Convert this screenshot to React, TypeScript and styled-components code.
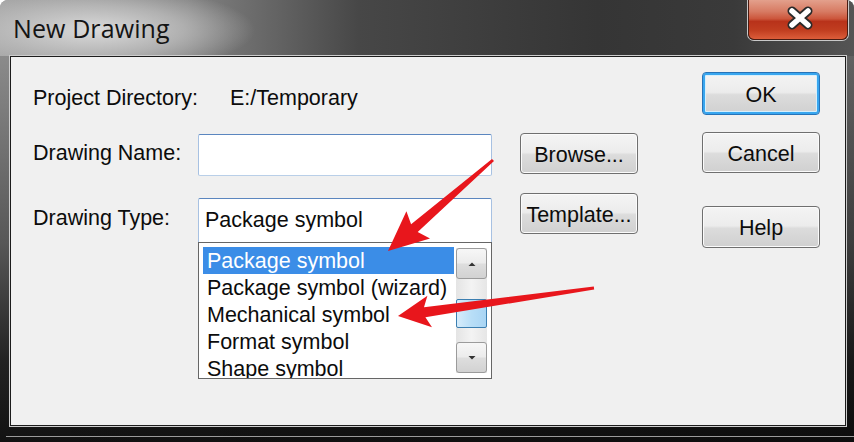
import React from 'react';
import styled, { createGlobalStyle } from 'styled-components';

const Global = createGlobalStyle`
  html, body { margin: 0; padding: 0; background: #ffffff; }
  body { font-family: "Liberation Sans", Arial, sans-serif; }
  * { box-sizing: border-box; }
`;

const Window = styled.div`
  position: relative;
  width: 854px;
  height: 442px;
  overflow: hidden;
  display: flex;
  flex-direction: column;
  border-radius: 8px 8px 0 0;
  background:
    linear-gradient(90deg, rgba(0,0,0,0) 0%, rgba(0,0,0,0.3) 100%),
    linear-gradient(180deg, #9a9a9a 0%, #7c7c7c 25%, #575757 55%, #222 82%, #121212 100%);
`;

const TitleBar = styled.div`
  height: 56px;
  flex: none;
  display: flex;
  align-items: flex-start;
  justify-content: space-between;
  padding-left: 13px;
  background:
    radial-gradient(ellipse 160px 44px at 95px 30px, rgba(222,222,222,0.95) 0%, rgba(200,200,200,0.65) 55%, rgba(190,190,190,0) 100%),
    linear-gradient(90deg, #a0a0a0 0%, #828282 22%, #474747 42%, #353535 70%, #3a3a3a 86%, #555 100%);
`;

const Title = styled.div`
  margin-top: 11px;
  font-family: "Open Sans", "Noto Sans", sans-serif;
  font-size: 25px;
  color: #141414;
  letter-spacing: 0.1px;
`;

const CloseButton = styled.div`
  width: 100px;
  height: 40px;
  margin-right: 6px;
  display: flex;
  align-items: center;
  justify-content: center;
  padding: 0 0 4px 4px;
  border: 1px solid #4a1c12;
  border-top: none;
  border-radius: 0 0 6px 6px;
  box-shadow: 0 0 0 1px #c9c9c9;
  background: linear-gradient(180deg, #e3a08c 0%, #d77a62 30%, #cc563b 48%, #b8321a 55%, #c13e20 78%, #dc5d3a 100%);
`;

const Client = styled.div`
  flex: none;
  height: 370px;
  margin: 0 8px 0 10px;
  border: 1px solid #1c1c1c;
  box-shadow: 0 0 0 1px #cdcdcd;
  background: #f0f0f0;
  display: flex;
  padding-left: 22px;
`;

const BottomFrame = styled.div`
  flex: none;
  height: 1px;
  margin: 10px 0 0 6px;
  background: #9a9a9a;
`;

const FormColumn = styled.div`
  display: flex;
  flex-direction: column;
  padding-top: 25px;
`;

const FormRow = styled.div<{ $mt: number }>`
  display: flex;
  align-items: flex-start;
  margin-top: ${p => p.$mt}px;
`;

const Label = styled.div<{ $h: number }>`
  width: 165px;
  font-size: 21.5px;
  line-height: ${p => p.$h}px;
  color: #0c0c0c;
  white-space: nowrap;
`;

const Value = styled.div`
  margin-left: 32px;
  font-size: 21.5px;
  line-height: 32px;
  color: #0c0c0c;
`;

const Field = styled.div<{ $mt: number }>`
  width: 294px;
  margin-top: ${p => p.$mt}px;
  display: flex;
  flex-direction: column;
`;

const TextBox = styled.div<{ $open?: boolean }>`
  height: ${p => (p.$open ? 44 : 42)}px;
  background: #fff;
  border: 1px solid #a7c1e2;
  border-top-color: #5b86bf;
  border-bottom: ${p => (p.$open ? 'none' : '1px solid #b9cfe8')};
  border-radius: ${p => (p.$open ? '2px 2px 0 0' : '2px')};
  padding-left: 6px;
  font-size: 21.5px;
  line-height: 42px;
  color: #0c0c0c;
`;

const ListBox = styled.div`
  height: 137px;
  background: #fff;
  border: 1px solid #666;
  display: flex;
`;

const Items = styled.div`
  flex: 1;
  overflow: hidden;
  padding: 4px 2px 0 4px;
`;

const Item = styled.div<{ $sel?: boolean }>`
  height: 27px;
  line-height: 28px;
  padding-left: 4px;
  font-size: 21.5px;
  white-space: nowrap;
  color: ${p => (p.$sel ? '#fff' : '#0c0c0c')};
  background: ${p => (p.$sel ? '#3b8de7' : 'transparent')};
`;

const ScrollBar = styled.div`
  width: 31px;
  margin: 5px 4px 5px 0;
  display: flex;
  flex-direction: column;
  background: linear-gradient(90deg, #e4e4e4 0%, #f3f3f3 50%, #e6e6e6 100%);
`;

const ScrollButton = styled.div`
  height: 31px;
  flex: none;
  border: 1px solid #9b9b9b;
  border-radius: 3px;
  display: flex;
  align-items: center;
  justify-content: center;
  background: linear-gradient(180deg, #f7f7f7 0%, #ececec 48%, #dedede 52%, #d2d2d2 100%);
`;

const Track = styled.div`
  flex: 1;
  display: flex;
  flex-direction: column;
`;

const Thumb = styled.div`
  margin-top: 20px;
  height: 29px;
  border: 1px solid #3c7fb1;
  border-radius: 2px;
  background: linear-gradient(90deg, #d6ecfb 0%, #b8def7 50%, #a9d5f4 100%);
`;

const Button = styled.div<{ $h: number; $mt?: number; $ml?: number; $default?: boolean }>`
  width: 118px;
  height: ${p => p.$h}px;
  margin-top: ${p => p.$mt ?? 0}px;
  margin-left: ${p => p.$ml ?? 0}px;
  flex: none;
  display: flex;
  align-items: center;
  justify-content: center;
  padding-top: 3px;
  font-size: 21.5px;
  color: #0c0c0c;
  border: 1px solid ${p => (p.$default ? '#2673b8' : '#6f6f6f')};
  border-radius: 4px;
  box-shadow: ${p =>
    p.$default
      ? 'inset 0 0 0 2px #38a6ef, inset 0 0 0 3px #d6effc'
      : 'inset 0 0 0 1px #fbfbfb'};
  background: linear-gradient(180deg, #f4f4f4 0%, #ececec 47%, #dcdcdc 53%, #d0d0d0 100%);
`;

const ButtonColumn = styled.div`
  display: flex;
  flex-direction: column;
  margin-left: 64px;
  padding-top: 15px;
`;

const Overlay = styled.svg`
  position: absolute;
  left: 0;
  top: 0;
  pointer-events: none;
`;

const Caret = ({ up }: { up?: boolean }) => (
  <svg width="10" height="6" viewBox="0 0 10 6">
    {up ? <path d="M1.5 5 L5 1.5 L8.5 5 Z" fill="#333" /> : <path d="M1.5 1 L8.5 1 L5 4.5 Z" fill="#333" />}
  </svg>
);

const CloseGlyph = () => (
  <svg width="28" height="24" viewBox="0 0 28 24">
    <path d="M6 5 L22 19 M22 5 L6 19" stroke="#2a2a2a" strokeWidth="9" strokeLinecap="round" />
    <path d="M6 5 L22 19 M22 5 L6 19" stroke="#ffffff" strokeWidth="5.5" strokeLinecap="round" />
  </svg>
);

const items = [
  'Package symbol',
  'Package symbol (wizard)',
  'Mechanical symbol',
  'Format symbol',
  'Shape symbol',
];

export default function App() {
  return (
    <>
      <Global />
      <Window>
        <TitleBar>
          <Title>New Drawing</Title>
          <CloseButton>
            <CloseGlyph />
          </CloseButton>
        </TitleBar>
        <Client>
          <FormColumn>
            <FormRow $mt={0}>
              <Label $h={32}>Project Directory:</Label>
              <Value>E:/Temporary</Value>
            </FormRow>
            <FormRow $mt={19}>
              <Label $h={40}>Drawing Name:</Label>
              <Field $mt={1}>
                <TextBox />
              </Field>
              <Button $h={41} $ml={28}>Browse...</Button>
            </FormRow>
            <FormRow $mt={17}>
              <Label $h={50}>Drawing Type:</Label>
              <Field $mt={5}>
                <TextBox $open>Package symbol</TextBox>
                <ListBox>
                  <Items>
                    {items.map((t, i) => (
                      <Item key={t} $sel={i === 0}>{t}</Item>
                    ))}
                  </Items>
                  <ScrollBar>
                    <ScrollButton><Caret up /></ScrollButton>
                    <Track><Thumb /></Track>
                    <ScrollButton><Caret /></ScrollButton>
                  </ScrollBar>
                </ListBox>
              </Field>
              <Button $h={41} $ml={28}>Template...</Button>
            </FormRow>
          </FormColumn>
          <ButtonColumn>
            <Button $h={43} $default>OK</Button>
            <Button $h={41} $mt={17}>Cancel</Button>
            <Button $h={42} $mt={33}>Help</Button>
          </ButtonColumn>
        </Client>
        <BottomFrame />
        <Overlay width="854" height="442" viewBox="0 0 854 442">
          <polygon
            points="492,158.9 411.1,224.3 406.4,211.2 388,251 430,238.4 417.7,231.9 494,161.1"
            fill="#e8161c"
          />
          <polygon
            points="593.8,286.5 424,307.2 427.4,295.7 398,316 432,327.3 425.4,317.2 594.2,289.5"
            fill="#e8161c"
          />
        </Overlay>
      </Window>
    </>
  );
}
